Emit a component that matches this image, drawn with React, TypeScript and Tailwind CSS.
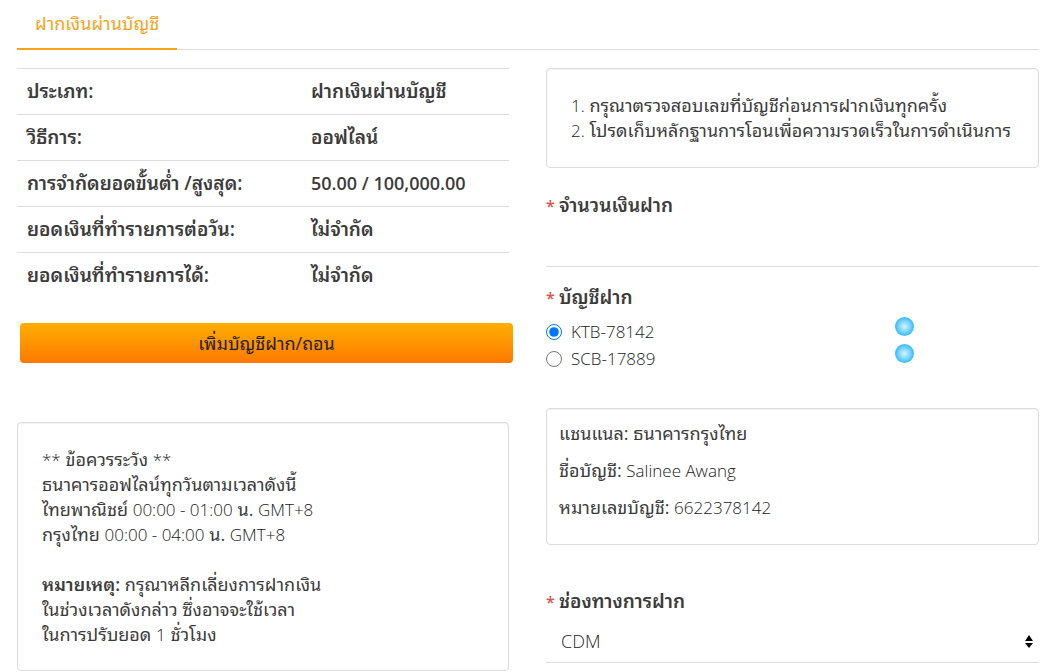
import React, { useState } from 'react';

interface LimitRow {
  label: string;
  value: string;
}

interface Account {
  id: string;
  code: string;
  bank: string;
  holder: string;
  number: string;
}

const limits: LimitRow[] = [
  { label: 'ประเภท:', value: 'ฝากเงินผ่านบัญชี' },
  { label: 'วิธีการ:', value: 'ออฟไลน์' },
  { label: 'การจำกัดยอดขั้นต่ำ /สูงสุด:', value: '50.00 / 100,000.00' },
  { label: 'ยอดเงินที่ทำรายการต่อวัน:', value: 'ไม่จำกัด' },
  { label: 'ยอดเงินที่ทำรายการได้:', value: 'ไม่จำกัด' },
];

const accounts: Account[] = [
  { id: 'ktb', code: 'KTB-78142', bank: 'ธนาคารกรุงไทย', holder: 'Salinee Awang', number: '6622378142' },
  { id: 'scb', code: 'SCB-17889', bank: 'ธนาคารไทยพาณิชย์', holder: 'Salinee Awang', number: '4051117889' },
];

function Panel({ className, children }: { className: string; children: React.ReactNode }) {
  return (
    <div className={`rounded border border-[#dcdcdc] shadow-[inset_0_1px_1px_rgba(0,0,0,0.05)] ${className}`}>
      {children}
    </div>
  );
}

// Latin text and digits are set lighter than the Thai around them
function Latin({ children }: { children: React.ReactNode }) {
  return <span className="text-[17px] font-light text-[#222222]">{children}</span>;
}

function Required() {
  return <span className="text-base text-[#d9534f]">* </span>;
}

export default function App() {
  const [amount, setAmount] = useState('');
  const [accountId, setAccountId] = useState('ktb');
  const [channel, setChannel] = useState('CDM');

  const account = accounts.find((a) => a.id === accountId) || accounts[0];

  return (
    <div className="bg-white pl-[17px] pr-[21px] font-['Open_Sans','Noto_Sans_Thai_Looped','Waree','Loma','Noto_Sans_Thai','Noto_Sans',sans-serif] text-[18px] leading-[25px] text-[#3c3c3c]">
      <nav className="flex h-[50px] border-b border-[#dcdcdc]">
        <a href="#deposit" className="-mb-px h-[50px] border-b-2 border-[#faa21b] px-[18px] pt-[11px] text-[#faa21b]">
          ฝากเงินผ่านบัญชี
        </a>
      </nav>

      <div className="grid grid-cols-2 gap-9 pt-[18px]">
        <div className="pr-px">
          <table className="w-full table-fixed">
            <tbody>
              {limits.map((row) => (
                <tr key={row.label} className="h-[46px] border-t border-[#dcdcdc]">
                  <th scope="row" className="w-[284px] px-2.5 text-left text-[19px] font-semibold">{row.label}</th>
                  <td className={`px-2.5 font-semibold ${/\d/.test(row.value) ? 'text-[18px]' : 'text-[19px]'}`}>
                    {row.value}
                  </td>
                </tr>
              ))}
            </tbody>
          </table>

          <div className="-mr-1 mt-6 pl-[3px]">
            <button type="button" className="h-10 w-full rounded bg-linear-to-b from-[#ffae00] to-[#ff7800] pt-0.5 text-[#222222]">
              เพิ่มบัญชีฝาก/ถอน
            </button>
          </div>

          <Panel className="mt-[59px] px-6 pt-6 pb-[23px]">
            <p><Latin>**</Latin> ข้อควรระวัง <Latin>**</Latin></p>
            <p>ธนาคารออฟไลน์ทุกวันตามเวลาดังนี้</p>
            <p>ไทยพาณิชย์ <Latin>00:00 - 01:00</Latin> น. <Latin>GMT+8</Latin></p>
            <p>กรุงไทย <Latin>00:00 - 04:00</Latin> น. <Latin>GMT+8</Latin></p>
            <p className="mt-[25px]">
              <b className="font-semibold">หมายเหตุ:</b> กรุณาหลีกเลี่ยงการฝากเงิน
            </p>
            <p>ในช่วงเวลาดังกล่าว ซึ่งอาจจะใช้เวลา</p>
            <p>ในการปรับยอด <Latin>1</Latin> ชั่วโมง</p>
          </Panel>
        </div>

        <form>
          <Panel className="px-6 py-6">
            <p><Latin>1.</Latin> กรุณาตรวจสอบเลขที่บัญชีก่อนการฝากเงินทุกครั้ง</p>
            <p><Latin>2.</Latin> โปรดเก็บหลักฐานการโอนเพื่อความรวดเร็วในการดำเนินการ</p>
          </Panel>

          <label htmlFor="amount" className="mt-[25px] block text-[19px] font-semibold">
            <Required />จำนวนเงินฝาก
          </label>
          <input
            id="amount"
            type="text"
            value={amount}
            onChange={(e) => setAmount(e.target.value)}
            className="mt-[9px] block h-10 w-full border-b border-[#dcdcdc] px-3 outline-none"
          />

          <fieldset className="mt-[18px]">
            <legend className="text-[19px] font-semibold">
              <Required />บัญชีฝาก
            </legend>
            {accounts.map((a) => (
              <div key={a.id} className="flex h-[27px] items-start first-of-type:mt-[3px]">
                <label className="flex w-[349px] items-center pt-1.5">
                  <input
                    type="radio"
                    name="account"
                    checked={accountId === a.id}
                    onChange={() => setAccountId(a.id)}
                    className="mr-[9px] size-4"
                  />
                  <Latin>{a.code}</Latin>
                </label>
                <span className="mt-1 size-[19px] rounded-full bg-radial from-[#d2f3ff] to-[#38c1fc] to-65%" />
              </div>
            ))}
          </fieldset>

          <Panel className="mt-[41px] flex flex-col gap-3 px-3 pt-3 pb-6">
            <p>แชนแนล: {account.bank}</p>
            <p>ชื่อบัญชี: <Latin>{account.holder}</Latin></p>
            <p>หมายเลขบัญชี: <Latin>{account.number}</Latin></p>
          </Panel>

          <label htmlFor="channel" className="mt-11 block text-[19px] font-semibold">
            <Required />ช่องทางการฝาก
          </label>
          <div className="relative mt-2">
            <select
              id="channel"
              value={channel}
              onChange={(e) => setChannel(e.target.value)}
              className="block h-[41px] w-full appearance-none border-b border-[#dcdcdc] bg-white px-[15px] pb-0.5 font-light text-[#222222] outline-none"
            >
              <option>CDM</option>
              <option>ATM</option>
            </select>
            <svg viewBox="0 0 8 13" className="pointer-events-none absolute top-[13px] right-1.5 h-[13px] w-2" fill="#000000">
              <path d="M4 0L8 6H0zM4 13L0 8H8z" />
            </svg>
          </div>
        </form>
      </div>
    </div>
  );
}
